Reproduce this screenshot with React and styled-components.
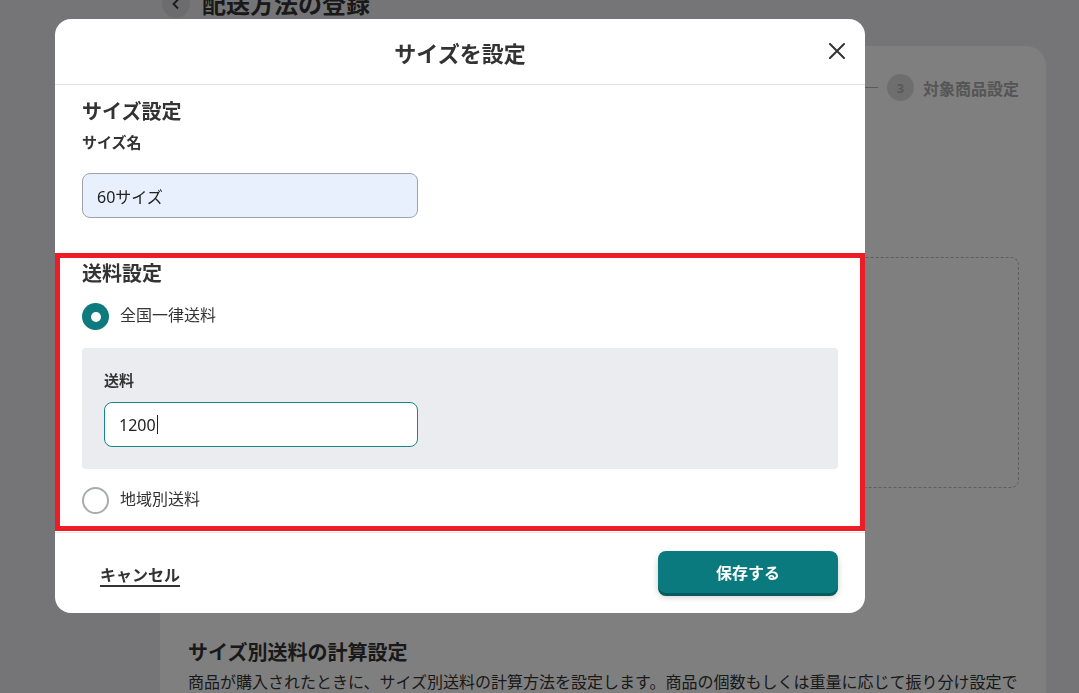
import React from "react";
import styled, { createGlobalStyle } from "styled-components";

const Global = createGlobalStyle`
  html, body { margin: 0; padding: 0; }
  body {
    background: #ebebef;
    font-family: "Noto Sans", "Noto Sans CJK JP", sans-serif;
    color: #333;
    overflow: hidden;
  }
  * { box-sizing: border-box; }
`;

const FONT = `"Noto Sans", "Noto Sans CJK JP", sans-serif`;

/* ---------- background page ---------- */
const Page = styled.div`
  width: 1079px;
  height: 693px;
  padding: 0 33px 0 160px;
  display: flex;
  flex-direction: column;
  overflow: hidden;
`;

const PageHeader = styled.div`
  display: flex;
  align-items: center;
  gap: 12px;
  margin-top: -10px;
  height: 28px;
`;

const BackButton = styled.div`
  width: 28px;
  height: 28px;
  border-radius: 50%;
  background: #d9d9dc;
  display: flex;
  align-items: center;
  justify-content: center;
  margin-left: 2px;
`;

const PageTitle = styled.h1`
  margin: 0;
  font-size: 24px;
  font-weight: 700;
  color: #333;
  line-height: 28px;
`;

const Card = styled.div`
  margin-top: 28px;
  background: #fff;
  border-radius: 20px;
  padding: 28px 27px 0 28px;
  flex: 1;
  display: flex;
  flex-direction: column;
`;

const Stepper = styled.div`
  display: flex;
  justify-content: flex-end;
  align-items: center;
  gap: 9px;
`;

const StepLine = styled.div`
  width: 16px;
  height: 1px;
  background: #b5b5b5;
`;

const StepNum = styled.div`
  width: 27px;
  height: 27px;
  border-radius: 50%;
  background: #dcdcdc;
  color: #b3b3b3;
  font-size: 13px;
  font-weight: 700;
  display: flex;
  align-items: center;
  justify-content: center;
`;

const StepLabel = styled.div`
  font-size: 16px;
  font-weight: 700;
  color: #aaa;
`;

const DropZone = styled.div`
  margin-top: 156px;
  height: 231px;
  border: 1.5px dashed #bdbdbd;
  border-radius: 8px;
`;

const CardTitle = styled.h2`
  margin: 151px 0 0;
  font-size: 20px;
  font-weight: 700;
  line-height: 28px;
  color: #333;
`;

const CardText = styled.p`
  margin: 2px 0 0;
  font-size: 16px;
  line-height: 26px;
  color: #333;
`;

/* ---------- modal ---------- */
const Backdrop = styled.div`
  position: fixed;
  inset: 0;
  background: rgba(0, 0, 0, 0.5);
`;

const Modal = styled.div`
  position: fixed;
  left: 55px;
  top: 19px;
  width: 810px;
  background: #fff;
  border-radius: 16px;
  overflow: hidden;
  font-family: ${FONT};
`;

const ModalHeader = styled.div`
  position: relative;
  height: 66px;
  border-bottom: 1px solid #e3e4ea;
  display: flex;
  align-items: center;
  justify-content: center;
`;

const ModalTitle = styled.h2`
  margin: 0;
  font-size: 22px;
  font-weight: 700;
  color: #333;
`;

const CloseButton = styled.button`
  position: absolute;
  right: 18px;
  top: 22px;
  width: 20px;
  height: 20px;
  padding: 0;
  border: 0;
  background: transparent;
  display: flex;
  align-items: center;
  justify-content: center;
`;

const Block = styled.div`
  padding: 13px 27px 0;
  display: flex;
  flex-direction: column;
`;

const SectionTitle = styled.h3`
  margin: 0;
  font-size: 20px;
  font-weight: 700;
  line-height: 28px;
  color: #333;
`;

const FieldLabel = styled.div`
  margin-top: ${(p) => p.$mt || 0}px;
  font-size: 15px;
  font-weight: 700;
  line-height: 22px;
  color: #333;
`;

const TextBox = styled.div`
  margin-top: ${(p) => p.$mt}px;
  width: ${(p) => p.$w}px;
  height: 45px;
  border-radius: 8px;
  border: 1px solid ${(p) => (p.$focus ? "#15878c" : "#9ea3ab")};
  background: ${(p) => (p.$autofill ? "#e8f0fe" : "#fff")};
  display: flex;
  align-items: center;
  padding: 0 14px;
  font-size: 16px;
  color: #222;
`;

const Caret = styled.span`
  display: inline-block;
  width: 1px;
  height: 19px;
  background: #222;
  margin-left: 1px;
`;

const FeeSection = styled.section`
  margin-top: 35px;
  border: 5px solid #ee1c25;
  padding: 2px 22px 12px;
  display: flex;
  flex-direction: column;
`;

const RadioRow = styled.label`
  margin-top: ${(p) => p.$mt}px;
  display: flex;
  align-items: center;
  gap: 11px;
  font-size: 16px;
  color: #333;
  height: 27px;
  line-height: 24px;
`;

const RadioMark = styled.span`
  width: 27px;
  height: 27px;
  border-radius: 50%;
  flex: none;
  display: flex;
  align-items: center;
  justify-content: center;
  background: ${(p) => (p.$checked ? "#0e7a7d" : "#fff")};
  border: ${(p) => (p.$checked ? "none" : "2px solid #a9abb2")};
  &::after {
    content: "";
    display: ${(p) => (p.$checked ? "block" : "none")};
    width: 10px;
    height: 10px;
    border-radius: 50%;
    background: #fff;
  }
`;

const RadioText = styled.span`
  margin-top: -3px;
`;

const FeePanel = styled.div`
  margin-top: 18px;
  background: #ebecf0;
  border-radius: 4px;
  padding: 21px 22px 22px;
  display: flex;
  flex-direction: column;
`;

const ModalFooter = styled.div`
  margin-top: 1px;
  border-top: 1px solid #e3e4ea;
  padding: 18px 27px 17px 45px;
  display: flex;
  align-items: center;
  justify-content: space-between;
`;

const CancelLink = styled.a`
  font-size: 16px;
  font-weight: 700;
  color: #333;
  text-decoration: underline;
  text-underline-offset: 4px;
  text-decoration-thickness: 1.5px;
`;

const SaveButton = styled.button`
  width: 180px;
  height: 42px;
  margin-bottom: 3px;
  border: 0;
  border-radius: 8px;
  background: #0b7a7e;
  color: #fff;
  font-family: ${FONT};
  font-size: 16px;
  font-weight: 700;
  box-shadow: 0 3px 0 #065b5e, 0 4px 6px rgba(0, 0, 0, 0.2);
`;

export default function App() {
  return (
    <>
      <Global />
      <Page>
        <PageHeader>
          <BackButton>
            <svg width="10" height="12" viewBox="0 0 10 12">
              <path d="M7 1.5 L2.5 6 L7 10.5" fill="none" stroke="#333" strokeWidth="1.8" />
            </svg>
          </BackButton>
          <PageTitle>配送方法の登録</PageTitle>
        </PageHeader>
        <Card>
          <Stepper>
            <StepNum>1</StepNum>
            <StepLabel>配送方法設定</StepLabel>
            <StepLine />
            <StepNum>2</StepNum>
            <StepLabel>サイズ設定</StepLabel>
            <StepLine />
            <StepNum>3</StepNum>
            <StepLabel>対象商品設定</StepLabel>
          </Stepper>
          <DropZone />
          <CardTitle>サイズ別送料の計算設定</CardTitle>
          <CardText>
            商品が購入されたときに、サイズ別送料の計算方法を設定します。商品の個数もしくは重量に応じて振り分け設定できます。
          </CardText>
        </Card>
      </Page>
      <Backdrop />
      <Modal>
        <ModalHeader>
          <ModalTitle>サイズを設定</ModalTitle>
          <CloseButton aria-label="閉じる">
            <svg width="16" height="16" viewBox="0 0 16 16">
              <path d="M1 1 L15 15 M15 1 L1 15" stroke="#333" strokeWidth="2" strokeLinecap="round" />
            </svg>
          </CloseButton>
        </ModalHeader>
        <Block>
          <SectionTitle>サイズ設定</SectionTitle>
          <FieldLabel $mt={5}>サイズ名</FieldLabel>
          <TextBox $mt={20} $w={336} $autofill>60サイズ</TextBox>
        </Block>
        <FeeSection>
          <SectionTitle>送料設定</SectionTitle>
          <RadioRow $mt={15}>
            <RadioMark $checked />
            <RadioText>全国一律送料</RadioText>
          </RadioRow>
          <FeePanel>
            <FieldLabel>送料</FieldLabel>
            <TextBox $mt={11} $w={314} $focus>
              1200
              <Caret />
            </TextBox>
          </FeePanel>
          <RadioRow $mt={18}>
            <RadioMark />
            <RadioText>地域別送料</RadioText>
          </RadioRow>
        </FeeSection>
        <ModalFooter>
          <CancelLink>キャンセル</CancelLink>
          <SaveButton>保存する</SaveButton>
        </ModalFooter>
      </Modal>
    </>
  );
}
